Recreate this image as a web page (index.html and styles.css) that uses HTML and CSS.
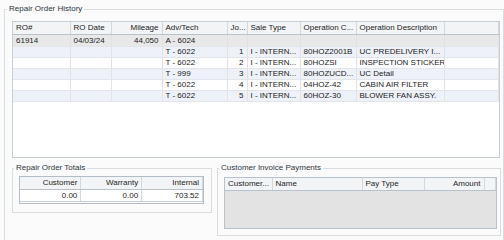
FILE: index.html
```html
<!DOCTYPE html>
<html lang="en">
<head>
    <meta charset="UTF-8">
    <title>Repair Order History</title>
    <link rel="stylesheet" href="styles.css">
</head>

<body>
    <!-- outer group -->
    <fieldset class="group history">
        <legend>Repair Order History</legend>

        <!-- history grid -->
        <div class="grid history-grid">
            <table>
                <colgroup>
                    <col style="width:57px">
                    <col style="width:41px">
                    <col style="width:51px">
                    <col style="width:65px">
                    <col style="width:20px">
                    <col style="width:53px">
                    <col style="width:56px">
                    <col style="width:88px">
                    <col>
                </colgroup>
                <thead>
                    <tr>
                        <th>RO#</th>
                        <th>RO Date</th>
                        <th class="num">Mileage</th>
                        <th>Adv/Tech</th>
                        <th>Jo...</th>
                        <th>Sale Type</th>
                        <th>Operation C...</th>
                        <th>Operation Description</th>
                        <th></th>
                    </tr>
                </thead>
                <tbody>
                    <tr class="ro">
                        <td>61914</td>
                        <td>04/03/24</td>
                        <td class="num">44,050</td>
                        <td>A - 6024</td>
                        <td></td><td></td><td></td><td></td><td></td>
                    </tr>
                    <tr>
                        <td></td><td></td><td></td>
                        <td>T - 6022</td>
                        <td class="num">1</td>
                        <td>I - INTERN...</td>
                        <td>80HOZ2001B</td>
                        <td>UC PREDELIVERY I...</td>
                        <td></td>
                    </tr>
                    <tr>
                        <td></td><td></td><td></td>
                        <td>T - 6022</td>
                        <td class="num">2</td>
                        <td>I - INTERN...</td>
                        <td>80HOZSI</td>
                        <td>INSPECTION STICKER</td>
                        <td></td>
                    </tr>
                    <tr>
                        <td></td><td></td><td></td>
                        <td>T - 999</td>
                        <td class="num">3</td>
                        <td>I - INTERN...</td>
                        <td>80HOZUCD...</td>
                        <td>UC Detail</td>
                        <td></td>
                    </tr>
                    <tr>
                        <td></td><td></td><td></td>
                        <td>T - 6022</td>
                        <td class="num">4</td>
                        <td>I - INTERN...</td>
                        <td>04HOZ-42</td>
                        <td>CABIN AIR FILTER</td>
                        <td></td>
                    </tr>
                    <tr>
                        <td></td><td></td><td></td>
                        <td>T - 6022</td>
                        <td class="num">5</td>
                        <td>I - INTERN...</td>
                        <td>60HOZ-30</td>
                        <td>BLOWER FAN ASSY.</td>
                        <td></td>
                    </tr>
                </tbody>
            </table>
        </div>

        <div class="lower">
            <!-- totals -->
            <fieldset class="group totals">
                <legend>Repair Order Totals</legend>
                <div class="grid totals-grid">
                    <table>
                        <thead>
                            <tr>
                                <th class="num">Customer</th>
                                <th class="num">Warranty</th>
                                <th class="num">Internal</th>
                            </tr>
                        </thead>
                        <tbody>
                            <tr>
                                <td class="num">0.00</td>
                                <td class="num">0.00</td>
                                <td class="num">703.52</td>
                            </tr>
                        </tbody>
                    </table>
                </div>
            </fieldset>

            <!-- payments -->
            <fieldset class="group payments">
                <legend>Customer Invoice Payments</legend>
                <div class="grid payments-grid">
                    <table>
                        <colgroup>
                            <col style="width:47px">
                            <col style="width:90px">
                            <col style="width:62px">
                            <col style="width:60px">
                            <col>
                        </colgroup>
                        <thead>
                            <tr>
                                <th>Customer...</th>
                                <th>Name</th>
                                <th>Pay Type</th>
                                <th class="num">Amount</th>
                                <th></th>
                            </tr>
                        </thead>
                    </table>
                </div>
            </fieldset>
        </div>
    </fieldset>
</body>

</html>
```

FILE: styles.css
```css
/* page */
html, body {
    height: 240px;
}

body {
    margin: 0;
    background-color: #fbfbfb;
    font-family: "Liberation Sans", Arial, sans-serif;
    font-size: 8px;
    color: #1c1c1c;
    overflow: hidden;
}

/* group boxes */
.group {
    border: 1px solid #d8dde2;
    margin: 0;
    min-width: 0;
}

.group legend {
    padding: 0 2px;
    margin-left: -5px;
    line-height: 10px;
    height: 10px;
    color: #2e3640;
}

.history {
    margin: 4px 0 0 4px;
    width: 500px;
    height: 238px;
    padding: 7px 0 0 7px;
    box-sizing: border-box;
    border-bottom: none;
}

/* grids */
.grid {
    border: 1px solid #c6ced6;
    background-color: #fff;
    box-sizing: border-box;
}

.grid table {
    border-collapse: collapse;
    table-layout: fixed;
    width: 100%;
}

th, td {
    padding: 0 3px;
    text-align: left;
    white-space: nowrap;
    overflow: hidden;
    font-weight: normal;
    line-height: 10px;
}

th {
    height: 12px;
    background-color: #f3f4f6;
    border-right: 1px solid #d3d8dd;
    border-bottom: 1px solid #b8c2cc;
}

td {
    height: 10px;
    border-right: 1px solid #e0e2e5;
    border-bottom: 1px solid #e2e5ea;
}

.num {
    text-align: right;
}

.history-grid {
    width: 488px;
    height: 137px;
}

.history-grid tbody tr:nth-child(even) td {
    background-color: #eef1f8;
}

.history-grid tr.ro td {
    height: 11px;
    background-color: #e8e8e8;
}

/* lower groups */
.lower {
    display: flex;
    gap: 5px;
    margin-top: 5px;
}

.totals {
    width: 200px;
    height: 50px;
    padding: 3px 7px 7px 6px;
    box-sizing: border-box;
}

.totals-grid {
    width: 185px;
    height: 28px;
    border-color: #b3bdc7;
}

.totals-grid td {
    height: 11px;
    border-right-color: #d3d8dd;
    border-bottom-color: #c6ced6;
}

.payments {
    width: 284px;
    height: 73px;
    padding: 4px 3px 7px 6px;
    box-sizing: border-box;
}

.payments-grid {
    width: 273px;
    height: 52px;
    background-color: #e3e3e3;
    border-color: #b8c2cc;
}

.payments-grid th {
    height: 12px;
}
```
